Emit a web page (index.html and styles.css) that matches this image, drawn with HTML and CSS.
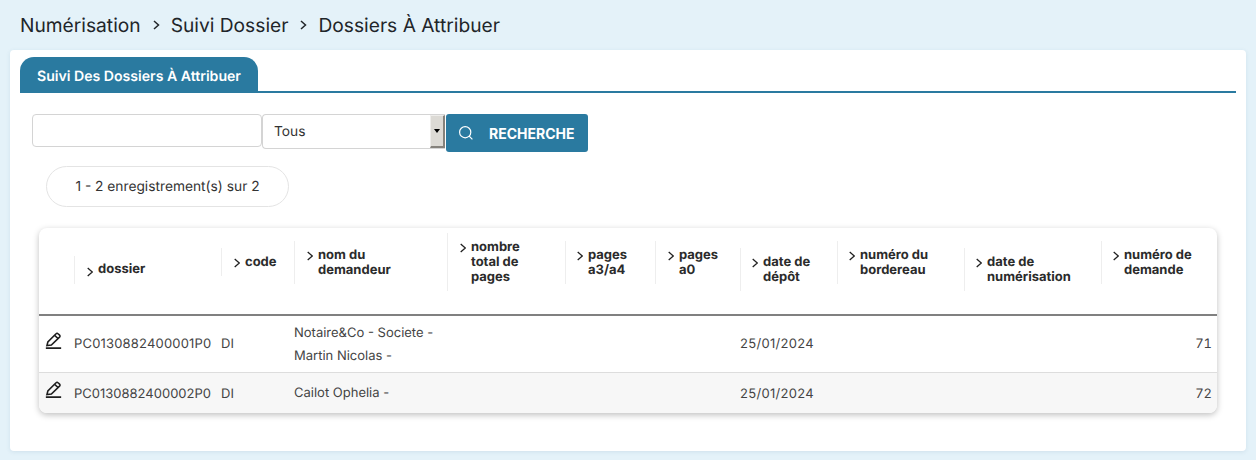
FILE: index.html
```html
<!DOCTYPE html>
<html lang="fr">
<head>
<meta charset="utf-8">
<title>Dossiers À Attribuer</title>
<link rel="stylesheet" href="styles.css">
</head>
<body>
<nav class="crumbs">
  <span>Numérisation</span>
  <svg class="crumb-sep" viewBox="0 0 10 12"><path d="M3 2l4.5 4L3 10"/></svg>
  <span>Suivi Dossier</span>
  <svg class="crumb-sep" viewBox="0 0 10 12"><path d="M3 2l4.5 4L3 10"/></svg>
  <span>Dossiers À Attribuer</span>
</nav>
<main class="panel">
  <div class="tabs"><div class="tab">Suivi Des Dossiers À Attribuer</div></div>
  <form class="search">
    <input class="field" type="text">
    <div class="select"><span class="select-value">Tous</span><span class="select-btn"><i class="caret"></i></span></div>
    <button class="btn" type="button">
      <svg class="btn-icon" viewBox="0 0 16 16"><circle cx="7.2" cy="7.2" r="5.6"/><path d="M11.2 11.2l3.2 3.2"/></svg>
      RECHERCHE
    </button>
  </form>
  <div class="count">1 - 2 enregistrement(s) sur 2</div>
  <div class="card">
    <table class="grid">
      <colgroup>
        <col class="c0"><col class="c1"><col class="c2"><col class="c3"><col class="c4"><col class="c5"><col class="c6"><col class="c7"><col class="c8"><col class="c9"><col class="c10">
      </colgroup>
      <thead>
        <tr>
          <th></th>
          <th class="low"><div class="hd up"><svg class="chev" viewBox="0 0 6 10"><path d="M.7 1l4.6 4-4.6 4"/></svg><span>dossier</span></div></th>
          <th><div class="hd"><svg class="chev" viewBox="0 0 6 10"><path d="M.7 1l4.6 4-4.6 4"/></svg><span>code</span></div></th>
          <th><div class="hd"><svg class="chev" viewBox="0 0 6 10"><path d="M.7 1l4.6 4-4.6 4"/></svg><span>nom du<br>demandeur</span></div></th>
          <th><div class="hd"><svg class="chev" viewBox="0 0 6 10"><path d="M.7 1l4.6 4-4.6 4"/></svg><span>nombre<br>total de<br>pages</span></div></th>
          <th><div class="hd tight"><svg class="chev" viewBox="0 0 6 10"><path d="M.7 1l4.6 4-4.6 4"/></svg><span>pages<br>a3/a4</span></div></th>
          <th><div class="hd"><svg class="chev" viewBox="0 0 6 10"><path d="M.7 1l4.6 4-4.6 4"/></svg><span>pages<br>a0</span></div></th>
          <th class="low"><div class="hd tight"><svg class="chev" viewBox="0 0 6 10"><path d="M.7 1l4.6 4-4.6 4"/></svg><span>date de<br>dépôt</span></div></th>
          <th><div class="hd tight"><svg class="chev" viewBox="0 0 6 10"><path d="M.7 1l4.6 4-4.6 4"/></svg><span>numéro du<br>bordereau</span></div></th>
          <th class="low"><div class="hd tight"><svg class="chev" viewBox="0 0 6 10"><path d="M.7 1l4.6 4-4.6 4"/></svg><span>date de<br>numérisation</span></div></th>
          <th><div class="hd tight"><svg class="chev" viewBox="0 0 6 10"><path d="M.7 1l4.6 4-4.6 4"/></svg><span>numéro de<br>demande</span></div></th>
        </tr>
      </thead>
      <tbody>
        <tr class="row-a">
          <td class="edit"><svg class="pen" viewBox="0 0 16 16"><path d="M.8 15.2h14.4M1.8 12.8l.9-3.4L10.4 1.7a1.3 1.3 0 0 1 1.9 0l1.4 1.3a1.3 1.3 0 0 1 0 1.9L6 12.3l-4.2.5zM9 3.1l3.3 3.2"/></svg></td>
          <td class="ref">PC0130882400001P0</td>
          <td>DI</td>
          <td class="name">Notaire&amp;Co - Societe -<br>Martin Nicolas -</td>
          <td></td><td></td><td></td>
          <td class="date">25/01/2024</td>
          <td></td><td></td>
          <td class="num">71</td>
        </tr>
        <tr class="row-b">
          <td class="edit"><svg class="pen" viewBox="0 0 16 16"><path d="M.8 15.2h14.4M1.8 12.8l.9-3.4L10.4 1.7a1.3 1.3 0 0 1 1.9 0l1.4 1.3a1.3 1.3 0 0 1 0 1.9L6 12.3l-4.2.5zM9 3.1l3.3 3.2"/></svg></td>
          <td class="ref">PC0130882400002P0</td>
          <td>DI</td>
          <td class="name">Cailot Ophelia -</td>
          <td></td><td></td><td></td>
          <td class="date">25/01/2024</td>
          <td></td><td></td>
          <td class="num">72</td>
        </tr>
      </tbody>
    </table>
  </div>
</main>
</body>
</html>
```
FILE: styles.css
```css
* { box-sizing: border-box; }
html, body { margin: 0; height: 460px; overflow: hidden; }
body {
  background: #e4f2f9;
  font-family: Inter, "Liberation Sans", sans-serif;
  color: #212529;
  padding: 0 10px;
  text-rendering: geometricPrecision;
}
.crumbs {
  height: 50px;
  padding: 0 0 0 10px;
  display: flex;
  align-items: center;
  font-size: 19.2px;
  line-height: 50px;
  color: #212529;
}
.crumb-sep { width: 10px; height: 12px; margin: 0 10px; fill: none; stroke: #212529; stroke-width: 1.5; }
.panel {
  height: 401px;
  background: #fff;
  border-radius: 4px;
  padding: 7px 10px 0;
  box-shadow: 0 1px 4px rgba(60, 110, 140, .12);
}
.tabs { border-bottom: 2px solid #2a7aa0; height: 36px; }
.tab {
  width: 238px;
  height: 34px;
  background: #2a7aa0;
  color: #fff;
  border-radius: 14px 14px 0 0;
  font-size: 14.1px;
  font-weight: 600;
  line-height: 39px;
  text-align: center;
}
.search { display: flex; align-items: flex-start; margin: 21px 0 0 12px; }
.field {
  width: 230px; height: 33px;
  border: 1px solid #d4d4d4; border-radius: 4px;
  background: #fff; padding: 0;
}
.select {
  width: 183px; height: 35px;
  border: 1px solid #d4d4d4; border-right: 0; border-radius: 4px 0 0 4px;
  display: flex; justify-content: space-between;
  font-size: 13.76px; line-height: 35px; color: #333;
  background: #fff;
}
.select-value { padding-left: 11px; }
.select-btn {
  width: 15px; height: 33px; background: #dcdad5;
  border-top: 1px solid #eeedeb; border-left: 1px solid #eeedeb;
  border-right: 2px solid #85827c; border-bottom: 2px solid #85827c;
  display: flex; align-items: center; justify-content: center;
}
.caret { width: 0; height: 0; border: 3px solid transparent; border-top: 4px solid #000; border-bottom: 0; }
.btn {
  width: 142px; height: 38px; margin-left: 1px;
  background: #2a7aa0; color: #fff; border: 0; border-radius: 3px;
  font: 700 14px Inter, "Liberation Sans", sans-serif;
  display: flex; align-items: center; padding: 0 0 0 12px;
}
.btn-icon { width: 16px; height: 16px; margin-right: 15px; fill: none; stroke: #fff; stroke-width: 1.2; flex: none; }
.count {
  width: 243px; height: 41px; margin: 14px 0 0 26px;
  border: 1px solid #e4e4e4; border-radius: 21px;
  font-size: 13.76px; line-height: 41px; text-align: center; color: #333;
}
.card {
  width: 1178px; height: 185px; margin: 21px 0 0 19px;
  border-radius: 8px;
  box-shadow: 0 2px 6px rgba(0, 0, 0, .25);
  overflow: hidden;
  background: #fff;
}
.grid { width: 1178px; border-collapse: collapse; table-layout: fixed; font-size: 13px; color: #444; }
.c0 { width: 35px; } .c1 { width: 147px; } .c2 { width: 73px; } .c3 { width: 153px; }
.c4 { width: 118px; } .c5 { width: 90px; } .c6 { width: 85px; } .c7 { width: 97px; }
.c8 { width: 127px; } .c9 { width: 137px; } .c10 { width: 116px; }
thead tr { height: 87px; }
th { padding: 0 0 18px; border-bottom: 2px solid #808080; vertical-align: middle; text-align: left; font-weight: 700; font-size: 13px; line-height: 15px; color: #2b2b2b; }
th.low { padding-bottom: 3px; }
.hd { display: flex; border-left: 1px solid #eee; padding: 7px 4px 6px 12px; }
.hd.tight { padding-left: 11px; }
.hd.up { padding-top: 6px; padding-bottom: 7px; }
.chev { width: 6px; height: 10px; margin: 3px 5px 0 0; flex: none; fill: none; stroke: #222; stroke-width: 1.3; }
.up .chev { margin-top: 5px; }
td { padding: 0; white-space: nowrap; }
.row-a { height: 57px; border-bottom: 1px solid #ddd; }
.row-a td.name { padding-top: 2px; }
.row-b { height: 41px; background: #f7f7f7; }
.row-b td { padding-top: 2px; }
.row-a .ref { letter-spacing: .18px; }
.date { letter-spacing: .3px; }
.name { line-height: 23px; }
.num { text-align: right; padding-right: 5px; font-variant-numeric: tabular-nums; }
td.edit { padding: 0 0 0 6px; vertical-align: top; }
.row-a td.edit { padding-top: 16px; }
.row-b td.edit { padding-top: 8px; }
.pen { display: block; width: 17px; height: 17px; fill: none; stroke: #1f1f1f; stroke-width: 1.5; }
```
